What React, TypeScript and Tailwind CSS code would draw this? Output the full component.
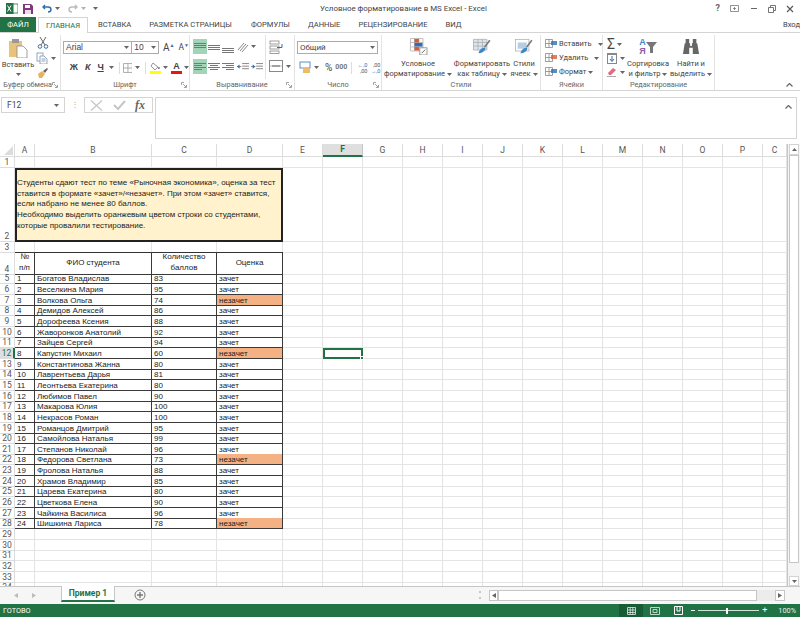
import React from 'react';

const students: [string, number, boolean][] = [
  ['Богатов Владислав', 83, false],
  ['Веселкина Мария', 95, false],
  ['Волкова Ольга', 74, true],
  ['Демидов Алексей', 86, false],
  ['Дорофеева Ксения', 88, false],
  ['Жаворонков Анатолий', 92, false],
  ['Зайцев Сергей', 94, false],
  ['Капустин Михаил', 60, true],
  ['Константинова Жанна', 80, false],
  ['Лаврентьева Дарья', 81, false],
  ['Леонтьева Екатерина', 80, false],
  ['Любимов Павел', 90, false],
  ['Макарова Юлия', 100, false],
  ['Некрасов Роман', 100, false],
  ['Романцов Дмитрий', 95, false],
  ['Самойлова Наталья', 99, false],
  ['Степанов Николай', 96, false],
  ['Федорова Светлана', 73, true],
  ['Фролова Наталья', 88, false],
  ['Храмов Владимир', 85, false],
  ['Царева Екатерина', 80, false],
  ['Цветкова Елена', 90, false],
  ['Чайкина Василиса', 96, false],
  ['Шишкина Лариса', 78, true],
];

const COLS = 'grid grid-cols-[15px_20px_117px_65px_66px_repeat(12,40px)_24px]';
const RIGHT_COLS = ['E', 'F', 'G', 'H', 'I', 'J', 'K', 'L', 'M', 'N', 'O', 'P', 'Q'];

function Caret({ className = '' }: { className?: string }) {
  return (
    <svg width="5" height="3" viewBox="0 0 5 3" className={className}>
      <path d="M0 0h5L2.5 3z" fill="#666" />
    </svg>
  );
}

function Launcher() {
  return (
    <svg width="6" height="6" viewBox="0 0 6 6" fill="none" stroke="#8a8a8a" strokeWidth="0.8">
      <path d="M.5 3V.5H3M5.5 3v2.5H3M2 2l3 3" />
    </svg>
  );
}

function Group({ width, label, launcher, children }: { width: string; label: string; launcher?: boolean; children: React.ReactNode }) {
  return (
    <div className={`flex h-full shrink-0 flex-col border-r border-[#e3e3e3] ${width}`}>
      <div className="flex min-h-0 flex-1">{children}</div>
      <div className="grid h-[11px] grid-cols-[1fr_auto_1fr] items-center whitespace-nowrap text-[7.3px] leading-none text-[#666]">
        <span />
        <span>{label}</span>
        <span className="flex justify-end pr-[2px]">{launcher && <Launcher />}</span>
      </div>
    </div>
  );
}

function LinesIcon({ rows }: { rows: [number, number, number][] }) {
  return (
    <svg width="14" height="14" viewBox="0 0 14 14">
      {rows.map(([x, y, w], i) => (
        <rect key={i} x={x} y={y} width={w} height="1" fill="#777" />
      ))}
    </svg>
  );
}

function BigLabel({ top, bottom }: { top: string; bottom: string }) {
  return (
    <div className="flex flex-col items-center text-[7.5px] leading-[10px] text-[#444]">
      <span className="whitespace-nowrap">{top}</span>
      <span className="flex items-center gap-[2px] whitespace-nowrap">
        {bottom}
        <Caret />
      </span>
    </div>
  );
}

function ClipboardGroup() {
  return (
    <Group width="w-[61px]" label="Буфер обмена" launcher>
      <div className="flex w-[36px] flex-col items-center pt-[3px]">
        <svg width="20" height="20" viewBox="0 0 20 20">
          <rect x="1" y="3" width="13" height="16" fill="#e9c27c" />
          <rect x="4" y="1" width="7" height="4" fill="#999" />
          <path d="M9 8h6l4 4v8H9z" fill="#fff" stroke="#888" strokeWidth="0.8" />
        </svg>
        <span className="mt-[2px] text-[7.5px] leading-[10px]">Вставить</span>
        <Caret className="mt-[3px]" />
      </div>
      <div className="flex flex-col gap-[3px] pt-[2px]">
        <svg width="12" height="12" viewBox="0 0 12 12" fill="none" stroke="#3a6ea5" strokeWidth="1" className="ml-[1px]">
          <circle cx="3" cy="9.5" r="1.8" />
          <circle cx="9" cy="9.5" r="1.8" />
          <path d="M4 8L9 0M8 8L3 0" stroke="#666" />
        </svg>
        <div className="flex items-center gap-[3px]">
          <svg width="12" height="12" viewBox="0 0 12 12">
            <rect x="1" y="1" width="6" height="8" fill="#fff" stroke="#7d8fa6" strokeWidth="0.8" />
            <path d="M4 4h4l3 3v5H4z" fill="#fff" stroke="#7d8fa6" strokeWidth="0.8" />
            <path d="M5.5 7h4M5.5 9h4" stroke="#5d8cc0" strokeWidth="0.8" />
          </svg>
          <Caret />
        </div>
        <svg width="12" height="12" viewBox="0 0 12 12" className="ml-[1px]">
          <path d="M1 7l4-3 3 3-3 4H2z" fill="#e4b35e" />
          <path d="M6 4l4-3 1 1-3 4z" fill="#666" />
        </svg>
      </div>
    </Group>
  );
}

function FontGroup() {
  return (
    <Group width="w-[129px]" label="Шрифт" launcher>
      <div className="flex w-full flex-col pl-[2px] pt-[6px]">
        <div className="flex h-[13px] items-center">
          <div className="flex h-full w-[70px] items-center justify-between border border-[#ababab] px-[2px] font-['Liberation_Sans',sans-serif] text-[8.5px]">
            Arial
            <Caret />
          </div>
          <div className="flex h-full w-[27px] items-center justify-between border border-l-0 border-[#ababab] px-[2px] font-['Liberation_Sans',sans-serif] text-[8.5px]">
            10
            <Caret />
          </div>
          <span className="ml-[4px] text-[10px] leading-none">A</span>
          <span className="mb-[5px] text-[5px] leading-none text-[#3a6ea5]">▲</span>
          <span className="ml-[4px] text-[8.5px] leading-none">A</span>
          <span className="mb-[5px] text-[5px] leading-none text-[#3a6ea5]">▼</span>
        </div>
        <div className="mt-[7px] flex h-[13px] items-center font-['Liberation_Sans',sans-serif] text-[#444]">
          <span className="ml-[4px] w-[14px] text-center text-[9px] font-bold leading-none">Ж</span>
          <span className="w-[14px] text-center text-[9px] font-bold italic leading-none">К</span>
          <span className="w-[12px] text-center text-[9px] font-bold leading-none underline">Ч</span>
          <Caret className="ml-[2px]" />
          <span className="ml-[5px] h-[12px] w-px bg-[#ddd]" />
          <svg width="10" height="10" viewBox="0 0 10 10" fill="none" stroke="#999" strokeWidth="0.8" className="ml-[3px]">
            <path d="M.5.5h9v9h-9zM5 .5v9M.5 5h9" />
          </svg>
          <Caret className="ml-[3px]" />
          <span className="ml-[5px] h-[12px] w-px bg-[#ddd]" />
          <svg width="11" height="13" viewBox="0 0 11 13" className="ml-[4px]">
            <path d="M3 2l5 4-3 3-4-4z" fill="#fff" stroke="#777" strokeWidth="0.8" />
            <circle cx="9" cy="7" r="1" fill="#777" />
            <rect x="0" y="10" width="11" height="3" fill="#ffff00" />
          </svg>
          <Caret className="ml-[2px]" />
          <div className="ml-[3px] flex w-[11px] flex-col items-center">
            <span className="text-[9px] font-bold leading-[10px]">A</span>
            <span className="h-[3px] w-full bg-[#e81416]" />
          </div>
          <Caret className="ml-[2px]" />
        </div>
      </div>
    </Group>
  );
}

function AlignGroup() {
  const top: [number, number, number][] = [[1, 3, 12], [1, 5, 12], [1, 7, 12]];
  const mid: [number, number, number][] = [[1, 5, 12], [1, 7, 12], [1, 9, 12]];
  const low: [number, number, number][] = [[1, 8, 12], [1, 10, 12], [1, 12, 12]];
  return (
    <Group width="w-[105px]" label="Выравнивание" launcher>
      <div className="flex w-[76px] flex-col border-r border-[#e3e3e3] pl-[3px] pt-[4px]">
        <div className="flex h-[15px] items-center">
          <div className="flex h-[15px] w-[14px] items-center justify-center bg-[#a2d5b8]">
            <LinesIcon rows={top} />
          </div>
          <div className="flex w-[14px] justify-center"><LinesIcon rows={mid} /></div>
          <div className="flex w-[14px] justify-center"><LinesIcon rows={low} /></div>
          <svg width="12" height="12" viewBox="0 0 12 12" fill="none" stroke="#777" className="ml-[2px]">
            <path d="M1 9l6-7M3 10l6-7M5 11l6-7" strokeWidth="0.9" />
          </svg>
          <Caret className="ml-[2px]" />
        </div>
        <div className="mt-[5px] flex h-[15px] items-center">
          <div className="flex h-[15px] w-[14px] items-center justify-center bg-[#a2d5b8]">
            <LinesIcon rows={[[1, 3, 12], [1, 5, 8], [1, 7, 12], [1, 9, 8]]} />
          </div>
          <div className="flex w-[14px] justify-center"><LinesIcon rows={[[1, 3, 12], [3, 5, 8], [1, 7, 12], [3, 9, 8]]} /></div>
          <div className="flex w-[14px] justify-center"><LinesIcon rows={[[1, 3, 12], [5, 5, 8], [1, 7, 12], [5, 9, 8]]} /></div>
          <svg width="12" height="10" viewBox="0 0 14 10" className="ml-[2px]">
            <path d="M6 1h8M6 4h8M6 7h8M0 4.5h5" stroke="#777" />
            <path d="M0 4.5L3 2v5z" fill="#2f6fb0" />
          </svg>
          <svg width="12" height="10" viewBox="0 0 14 10" className="ml-[2px]">
            <path d="M6 1h8M6 4h8M6 7h8M0 4.5h5" stroke="#777" />
            <path d="M5 4.5L2 2v5z" fill="#2f6fb0" />
          </svg>
        </div>
      </div>
      <div className="flex flex-col pl-[3px] pt-[5px]">
        <svg width="14" height="14" viewBox="0 0 14 14" fill="none">
          <rect x="1" y="1" width="9" height="3" stroke="#888" strokeWidth="0.8" />
          <rect x="1" y="6" width="9" height="3" stroke="#888" strokeWidth="0.8" />
          <rect x="1" y="11" width="9" height="2.5" stroke="#888" strokeWidth="0.8" />
          <path d="M8 7.5h5M13 4v3.5" stroke="#2f6fb0" />
        </svg>
        <div className="mt-[6px] flex items-center gap-[3px]">
          <svg width="14" height="12" viewBox="0 0 14 12" fill="none">
            <rect x=".5" y=".5" width="13" height="11" stroke="#888" />
            <path d="M1 6h12" stroke="#bbb" />
            <path d="M3 6h8" stroke="#666" />
          </svg>
          <Caret />
        </div>
      </div>
    </Group>
  );
}

function NumberGroup() {
  return (
    <Group width="w-[87px]" label="Число" launcher>
      <div className="flex w-full flex-col pl-[2px] pt-[6px]">
        <div className="flex h-[13px] w-[81px] items-center justify-between border border-[#ababab] px-[2px] text-[8px]">
          Общий
          <Caret />
        </div>
        <div className="mt-[7px] flex h-[13px] items-center">
          <svg width="13" height="13" viewBox="0 0 13 13" className="ml-[2px]">
            <rect x="1" y="1" width="10" height="6" fill="#fff" stroke="#5a8fc7" />
            <rect x="4" y="7" width="7" height="5" fill="#eebb66" />
          </svg>
          <Caret className="ml-[2px]" />
          <span className="ml-[6px] text-[10px] leading-none">%</span>
          <span className="ml-[3px] text-[7px] font-bold leading-none text-[#777]">000</span>
          <span className="ml-[4px] h-[12px] w-px bg-[#ddd]" />
          <span className="ml-[2px] flex w-[13px] flex-col text-right text-[5.5px] leading-[6px] text-[#555]">
            <span className="text-[#2f6fb0]">←,0</span>
            <span>,00</span>
          </span>
          <span className="flex w-[13px] flex-col text-right text-[5.5px] leading-[6px] text-[#555]">
            <span>,00</span>
            <span className="text-[#2f6fb0]">→,0</span>
          </span>
        </div>
      </div>
    </Group>
  );
}

function StylesGroup() {
  return (
    <Group width="w-[159px]" label="Стили">
      <div className="flex w-[72px] flex-col items-center pt-[3px]">
        <svg width="19" height="19" viewBox="0 0 19 19">
          <path d="M.5.5h14v14H.5zM.5 5h14M.5 10h14M5 .5v14M10 .5v14" fill="#fff" stroke="#aaa" strokeWidth="0.8" />
          <rect x="5" y="1" width="5" height="4" fill="#d75b3b" />
          <rect x="5" y="5.5" width="9" height="4" fill="#2f6fb0" />
          <rect x="5" y="10" width="5" height="4" fill="#d75b3b" />
          <rect x="11" y="11" width="8" height="8" fill="#fff" stroke="#777" strokeWidth="0.8" />
          <path d="M13 17l4-4" stroke="#555" />
        </svg>
        <div className="mt-[4px]"><BigLabel top="Условное" bottom="форматирование" /></div>
      </div>
      <div className="flex w-[56px] flex-col items-center pt-[3px]">
        <svg width="20" height="19" viewBox="0 0 20 19">
          <path d="M.5 1.5h15v12H.5zM.5 5h15M.5 9h15M5.5 1.5v12M10.5 1.5v12" fill="#dbe5ef" stroke="#aaa" strokeWidth="0.8" />
          <path d="M12 10l6-8 1.5 1-6 8z" fill="#777" />
          <path d="M6 17c1-4 4-6 7-6l1 1c-1 3-4 5-8 5z" fill="#3d87c9" />
        </svg>
        <div className="mt-[4px]"><BigLabel top="Форматировать" bottom="как таблицу" /></div>
      </div>
      <div className="flex w-[28px] flex-col items-center pt-[3px]">
        <svg width="20" height="19" viewBox="0 0 20 19">
          <rect x=".5" y="1.5" width="15" height="13" fill="#fff" stroke="#aaa" strokeWidth="0.8" />
          <rect x="3" y="5" width="10" height="7" fill="#b7cde4" />
          <path d="M12 10l6-8 1.5 1-6 8z" fill="#777" />
          <path d="M6 17c1-4 4-6 7-6l1 1c-1 3-4 5-8 5z" fill="#3d87c9" />
        </svg>
        <div className="mt-[4px]"><BigLabel top="Стили" bottom="ячеек" /></div>
      </div>
    </Group>
  );
}

function CellRow({ label, mark, caretClass }: { label: string; mark: string; caretClass: string }) {
  return (
    <div className="flex h-[14px] items-center text-[7.5px] leading-none">
      <svg width="12" height="12" viewBox="0 0 12 12" fill="none">
        <path d="M.5 1.5h7v8h-7zM.5 5.5h7M4 1.5v8" stroke="#888" strokeWidth="0.8" />
        <rect x="6" y="3" width="6" height="4" fill={mark} opacity="0.8" />
      </svg>
      <span className="ml-[2px]">{label}</span>
      <Caret className={caretClass} />
    </div>
  );
}

function CellsGroup() {
  return (
    <Group width="w-[62px]" label="Ячейки">
      <div className="flex flex-col pl-[4px] pt-[2px]">
        <CellRow label="Вставить" mark="#2f6fb0" caretClass="ml-[6px]" />
        <CellRow label="Удалить" mark="#d75b3b" caretClass="ml-[6px]" />
        <CellRow label="Формат" mark="#2f6fb0" caretClass="ml-[2px]" />
      </div>
    </Group>
  );
}

function EditGroup() {
  return (
    <Group width="w-[112px]" label="Редактирование">
      <div className="flex w-[23px] flex-col pl-[4px] pt-[2px]">
        <div className="flex h-[14px] items-center gap-[2px]">
          <span className="text-[14px] leading-none">Σ</span>
          <Caret />
        </div>
        <div className="flex h-[14px] items-center gap-[3px]">
          <svg width="10" height="11" viewBox="0 0 10 11">
            <rect x=".5" y=".5" width="9" height="10" fill="#fff" stroke="#888" />
            <rect x="0" y="0" width="10" height="2" fill="#888" />
            <path d="M5 3v5M3 6l2 2.5L7 6" stroke="#2f6fb0" fill="none" />
          </svg>
          <Caret />
        </div>
        <div className="flex h-[14px] items-center gap-[3px]">
          <svg width="10" height="10" viewBox="0 0 10 10">
            <path d="M1 6l5-5 3 2-5 5H2z" fill="#e46a7d" />
            <path d="M0 9.5h9" stroke="#aaa" />
          </svg>
          <Caret />
        </div>
      </div>
      <div className="flex w-[44px] flex-col items-center pt-[3px]">
        <div className="flex h-[19px] items-start">
          <div className="flex flex-col font-['Liberation_Sans',sans-serif] text-[9px] font-bold leading-[8.5px]">
            <span className="text-[#3d87c9]">A</span>
            <span className="text-[#8b5aa8]">Я</span>
          </div>
          <svg width="11" height="11" viewBox="0 0 11 11" className="mt-[4px]">
            <path d="M0 0h11L7 5v6H4V5z" fill="#777" />
          </svg>
        </div>
        <div className="mt-[4px]"><BigLabel top="Сортировка" bottom="и фильтр" /></div>
      </div>
      <div className="flex w-[42px] flex-col items-center pt-[3px]">
        <svg width="18" height="19" viewBox="0 0 18 19" fill="#666">
          <path d="M3 1h4v5H3zM11 1h4v5h-4zM2 6h6v3h2V6h6l2 12h-7V11H7v7H0z" />
        </svg>
        <div className="mt-[4px]"><BigLabel top="Найти и" bottom="выделить" /></div>
      </div>
    </Group>
  );
}

function Chevron({ className = '' }: { className?: string }) {
  return (
    <svg width="7" height="4" viewBox="0 0 7 4" fill="none" stroke="#666" strokeWidth="1.2" className={className}>
      <path d="M.5 3.5l3-3 3 3" />
    </svg>
  );
}

function TitleBar() {
  return (
    <div className="flex h-[17px] shrink-0 items-center">
      <svg width="12" height="11" viewBox="0 0 12 11" className="ml-[6px]">
        <rect x="5" y="1" width="7" height="9" fill="#fff" stroke="#217346" strokeWidth="0.8" />
        <rect x="0" y="0" width="7.5" height="11" fill="#217346" />
        <path d="M1.5 2.5l3.5 6M5 2.5l-3.5 6" stroke="#fff" strokeWidth="1" />
      </svg>
      <svg width="10" height="10" viewBox="0 0 10 10" className="ml-[5px]">
        <path d="M0 0h8l2 2v8H0z" fill="#80397b" />
        <rect x="2" y="1" width="5" height="3" fill="#fff" />
        <rect x="2" y="6" width="6" height="4" fill="#e9dbe8" />
      </svg>
      <svg width="10" height="9" viewBox="0 0 10 9" fill="none" stroke="#2f6fb0" strokeWidth="1.4" className="ml-[9px]">
        <path d="M3 1L1 3l2 2M1 3h5c4 0 4 5 0 5" />
      </svg>
      <Caret className="ml-[3px]" />
      <svg width="10" height="9" viewBox="0 0 10 9" fill="none" stroke="#bbb" strokeWidth="1.4" className="ml-[8px]">
        <path d="M7 1l2 2-2 2M9 3H4C0 3 0 8 4 8" />
      </svg>
      <Caret className="ml-[3px] opacity-50" />
      <Caret className="ml-[7px]" />
      <span className="ml-[222px] whitespace-nowrap text-[7.9px] leading-none text-[#444]">Условное форматирование в MS Excel - Excel</span>
      <span className="ml-auto mr-[10px] text-[9px] font-bold leading-none text-[#666]">?</span>
      <svg width="9" height="7" viewBox="0 0 9 7" fill="none" stroke="#777" className="mr-[12px]">
        <path d="M.5.5h8v6h-8zM4.5 2v3M3 3.5h3" strokeWidth="0.8" />
      </svg>
      <span className="mr-[11px] h-px w-[6px] bg-[#666]" />
      <svg width="8" height="8" viewBox="0 0 8 8" fill="none" stroke="#666" strokeWidth="0.9" className="mr-[10px]">
        <path d="M.5 2.5h5v5h-5zM2.5 2.5v-2h5v5h-2" />
      </svg>
      <svg width="8" height="8" viewBox="0 0 8 8" fill="none" stroke="#555" strokeWidth="1.1" className="mr-[6px]">
        <path d="M1 1l6 6M7 1L1 7" />
      </svg>
    </div>
  );
}

function Tabs() {
  const tabs = [
    ['ВСТАВКА', 'ml-[10px]'],
    ['РАЗМЕТКА СТРАНИЦЫ', 'ml-[18px]'],
    ['ФОРМУЛЫ', 'ml-[19px]'],
    ['ДАННЫЕ', 'ml-[18px]'],
    ['РЕЦЕНЗИРОВАНИЕ', 'ml-[18px]'],
    ['ВИД', 'ml-[18px]'],
  ];
  return (
    <div className="flex h-[16px] shrink-0 items-stretch border-b border-[#d4d4d4] text-[7.6px] leading-none text-[#444]">
      <div className="flex w-[36px] items-center justify-center bg-[#217346] text-white">ФАЙЛ</div>
      <div className="-mb-px ml-[2px] flex w-[50px] items-center justify-center border border-b-0 border-[#d4d4d4] bg-white text-[#217346]">ГЛАВНАЯ</div>
      {tabs.map(([name, gap]) => (
        <div key={name} className={`flex items-center whitespace-nowrap ${gap}`}>{name}</div>
      ))}
      <div className="ml-auto flex items-center">Вход</div>
    </div>
  );
}

function Ribbon() {
  return (
    <div className="flex h-[58px] shrink-0 items-stretch border-b border-[#d4d4d4] pt-[2px]">
      <ClipboardGroup />
      <FontGroup />
      <AlignGroup />
      <NumberGroup />
      <StylesGroup />
      <CellsGroup />
      <EditGroup />
      <div className="flex flex-1 items-end justify-end pb-[3px] pr-[7px]">
        <Chevron />
      </div>
    </div>
  );
}

function FormulaBar() {
  return (
    <div className="mt-[6px] flex h-[42px] shrink-0 items-start pl-[1px] pr-[3px]">
      <div className="flex h-[16px] w-[64px] items-center justify-between border border-[#d4d4d4] px-[5px] text-[8.5px]">
        F12
        <Caret />
      </div>
      <div className="flex h-[16px] w-[19px] items-center justify-center text-[8px] leading-none text-[#aaa]">⋮</div>
      <div className="flex h-[16px] w-[69px] items-center border border-[#d4d4d4]">
        <svg width="13" height="11" viewBox="0 0 13 11" fill="none" stroke="#c6c6c6" strokeWidth="1.2" className="ml-[5px]">
          <path d="M1 .5l11 10M12 .5L1 10.5" />
        </svg>
        <svg width="13" height="10" viewBox="0 0 13 10" fill="none" stroke="#c6c6c6" strokeWidth="2" className="ml-[10px]">
          <path d="M1 5l4 4 7-8" />
        </svg>
        <span className="ml-[9px] font-['Liberation_Serif',serif] text-[12px] font-bold italic leading-none text-[#666]">fx</span>
      </div>
      <div className="ml-[2px] flex h-full flex-1 items-start justify-end border border-[#d4d4d4] pr-[4px] pt-[7px]">
        <Chevron />
      </div>
    </div>
  );
}

function HeaderCell({ children, active }: { children?: React.ReactNode; active?: boolean }) {
  return (
    <div className={`flex items-center justify-center overflow-hidden text-[8.5px] leading-none ${active ? 'border-b-2 border-r border-b-[#217346] border-r-[#c6c6c6] bg-[#dfdfdf] font-bold text-[#217346]' : 'border-b border-r border-[#dcdcdc] text-[#555]'}`}>
      {children}
    </div>
  );
}

function RowHead({ n, active }: { n: number; active?: boolean }) {
  return (
    <div className={`flex items-end justify-center text-[8.5px] leading-[10px] ${active ? 'border-b border-r-2 border-b-[#dcdcdc] border-r-[#217346] bg-[#dfdfdf] text-[#217346]' : 'border-b border-r border-[#dcdcdc] text-[#555]'}`}>
      {n}
    </div>
  );
}

function GridTail({ selected }: { selected?: boolean }) {
  return (
    <>
      {RIGHT_COLS.map((c) =>
        selected && c === 'F' ? (
          <div key={c} className="relative border-2 border-[#217346]">
            <span className="absolute -bottom-[3px] -right-[3px] h-[4px] w-[4px] border border-white bg-[#217346]" />
          </div>
        ) : (
          <div key={c} className="border-b border-r border-[#e4e4e4]" />
        ),
      )}
    </>
  );
}

function EmptyRow({ n, dark }: { n: number; dark?: boolean }) {
  const cell = dark ? 'border-b border-r border-b-[#333] border-r-[#e4e4e4]' : 'border-b border-r border-[#e4e4e4]';
  return (
    <div className={`${COLS} h-[10.67px]`}>
      <RowHead n={n} />
      <div className={cell} />
      <div className={cell} />
      <div className={cell} />
      <div className={cell} />
      <GridTail />
    </div>
  );
}

function StudentRow({ idx, name, score, failed }: { idx: number; name: string; score: number; failed: boolean }) {
  const cell = "flex items-end whitespace-nowrap border-b border-r border-[#3a3a3a] pl-[2px] font-['Liberation_Sans',sans-serif] text-[8px] leading-[9px] text-[#222]";
  return (
    <div className={`${COLS} h-[10.67px]`}>
      <RowHead n={idx + 4} active={idx === 8} />
      <div className={cell}>{idx}</div>
      <div className={cell}>{name}</div>
      <div className={cell}>{score}</div>
      <div className={`${cell} ${failed ? 'bg-[#f4b183]' : ''}`}>{failed ? 'незачет' : 'зачет'}</div>
      <GridTail selected={idx === 8} />
    </div>
  );
}

function Sheet() {
  const head = "flex items-center justify-center border-b border-r border-[#3a3a3a] text-center font-['Liberation_Sans',sans-serif] text-[8px] leading-[10.67px] text-[#222]";
  return (
    <div className="min-w-0 flex-1 overflow-hidden">
      <div className={`${COLS} h-[13px]`}>
        <div className="flex items-end justify-end border-b border-r border-[#dcdcdc] p-[1px]">
          <svg width="9" height="9" viewBox="0 0 9 9"><path d="M9 0v9H0z" fill="#dcdcdc" /></svg>
        </div>
        <HeaderCell>A</HeaderCell>
        <HeaderCell>B</HeaderCell>
        <HeaderCell>C</HeaderCell>
        <HeaderCell>D</HeaderCell>
        {RIGHT_COLS.map((c) => (
          <HeaderCell key={c} active={c === 'F'}>{c === 'Q' ? 'C' : c}</HeaderCell>
        ))}
      </div>
      <EmptyRow n={1} />
      <div className={`${COLS} h-[74px]`}>
        <RowHead n={2} />
        <div className="col-span-4 flex flex-col justify-center border-2 border-[#222] bg-[#fff2cc] font-['Liberation_Sans',sans-serif] text-[8px] leading-[10.67px] text-[#222]">
          <span className="whitespace-nowrap">Студенты сдают тест по теме «Рыночная экономика», оценка за тест</span>
          <span className="whitespace-nowrap">ставится в формате «зачет»/«незачет». При этом «зачет» ставится,</span>
          <span className="whitespace-nowrap">если набрано не менее 80 баллов.</span>
          <span className="whitespace-nowrap">Необходимо выделить оранжевым цветом строки со студентами,</span>
          <span className="whitespace-nowrap">которые провалили тестирование.</span>
        </div>
        <GridTail />
      </div>
      <EmptyRow n={3} dark />
      <div className={`${COLS} h-[21px]`}>
        <RowHead n={4} />
        <div className={head}>№<br />п/п</div>
        <div className={head}>ФИО студента</div>
        <div className={head}>Количество<br />баллов</div>
        <div className={head}>Оценка</div>
        <GridTail />
      </div>
      {students.map(([name, score, failed], i) => (
        <StudentRow key={name} idx={i + 1} name={name} score={score} failed={failed} />
      ))}
      {[29, 30, 31, 32, 33, 34].map((n) => (
        <EmptyRow key={n} n={n} />
      ))}
    </div>
  );
}

function VScroll() {
  return (
    <div className="flex w-[13px] shrink-0 flex-col items-center border-l border-[#c6c6c6] bg-[#f4f4f4] px-[1px]">
      <div className="flex h-[11px] w-full items-center justify-center border border-[#d4d4d4] bg-white">
        <svg width="5" height="3" viewBox="0 0 5 3"><path d="M0 3h5L2.5 0z" fill="#666" /></svg>
      </div>
      <div className="h-[408px] w-full border border-[#c6c6c6] bg-white" />
      <div className="mt-auto flex h-[10px] w-full items-center justify-center border border-[#d4d4d4] bg-white">
        <Caret />
      </div>
    </div>
  );
}

function SheetTabs() {
  return (
    <div className="flex h-[18px] shrink-0 items-start border-t border-[#c6c6c6] bg-[#f6f6f6]">
      <svg width="4" height="5" viewBox="0 0 4 5" className="ml-[14px] mt-[6px]"><path d="M4 0v5L0 2.5z" fill="#bbb" /></svg>
      <svg width="4" height="5" viewBox="0 0 4 5" className="ml-[14px] mt-[6px]"><path d="M0 0v5l4-2.5z" fill="#bbb" /></svg>
      <div className="-mt-px ml-[25px] flex h-[16px] w-[54px] items-center justify-center border-x border-b-2 border-x-[#c6c6c6] border-b-[#217346] bg-white text-[8.5px] font-bold leading-none text-[#217346]">
        Пример 1
      </div>
      <svg width="12" height="12" viewBox="0 0 12 12" fill="none" stroke="#777" className="ml-[19px] mt-[2px]">
        <circle cx="6" cy="6" r="5" />
        <path d="M6 3v6M3 6h6" strokeWidth="1.4" />
      </svg>
      <div className="ml-[333px] mt-[4px] h-[8px] w-[2px] border-y-2 border-[#c8c8c8]" />
      <div className="ml-[8px] mt-[3px] flex h-[11px] w-[9px] items-center justify-center border border-[#c6c6c6] bg-white">
        <svg width="4" height="5" viewBox="0 0 4 5"><path d="M4 0v5L0 2.5z" fill="#666" /></svg>
      </div>
      <div className="mt-[3px] h-[11px] w-[259px] border border-[#c6c6c6] bg-white" />
      <div className="mt-[3px] h-[11px] w-[18px] bg-[#ececec]" />
      <div className="mt-[3px] flex h-[11px] w-[10px] items-center justify-center border border-[#c6c6c6] bg-white">
        <svg width="4" height="5" viewBox="0 0 4 5"><path d="M0 0v5l4-2.5z" fill="#666" /></svg>
      </div>
    </div>
  );
}

function StatusBar() {
  return (
    <div className="flex h-[13px] shrink-0 items-stretch bg-[#217346] text-[7.3px] leading-none text-white">
      <span className="ml-[3px] flex items-center">ГОТОВО</span>
      <div className="ml-auto flex w-[24px] items-center justify-center bg-[#185c37]">
        <svg width="9" height="8" viewBox="0 0 9 8" fill="none" stroke="#dfeee6" strokeWidth="0.8">
          <path d="M.5.5h8v7h-8zM.5 3h8M.5 5.5h8M3.2.5v7M5.8.5v7" />
        </svg>
      </div>
      <div className="flex w-[24px] items-center justify-center">
        <svg width="10" height="8" viewBox="0 0 10 8" fill="none" stroke="#bcd7c8">
          <path d="M.5.5h9v7h-9zM3 2.5h4v3H3z" />
        </svg>
      </div>
      <div className="flex w-[22px] items-center justify-center">
        <svg width="9" height="9" viewBox="0 0 9 9" fill="none" stroke="#fff">
          <path d="M.5.5h8v8h-8zM3 .5V5h3V.5" />
        </svg>
      </div>
      <div className="ml-[2px] flex items-center">
        <span className="h-px w-[4px] bg-white" />
        <span className="ml-[3px] h-px w-[28px] bg-[#cfe3d8]" />
        <span className="h-[6px] w-[2px] bg-white" />
        <span className="h-px w-[31px] bg-[#cfe3d8]" />
        <span className="ml-[3px] text-[9px] leading-none">+</span>
      </div>
      <span className="ml-[11px] mr-[4px] flex items-center text-[#e6f1ea]">100%</span>
    </div>
  );
}

export default function App() {
  return (
    <div className="flex h-[617px] w-[800px] flex-col overflow-hidden bg-white font-['Roboto','Liberation_Sans',sans-serif] text-[#444]">
      <TitleBar />
      <Tabs />
      <Ribbon />
      <FormulaBar />
      <div className="flex min-h-0 flex-1 items-stretch pt-[5px]">
        <Sheet />
        <VScroll />
      </div>
      <SheetTabs />
      <StatusBar />
    </div>
  );
}
